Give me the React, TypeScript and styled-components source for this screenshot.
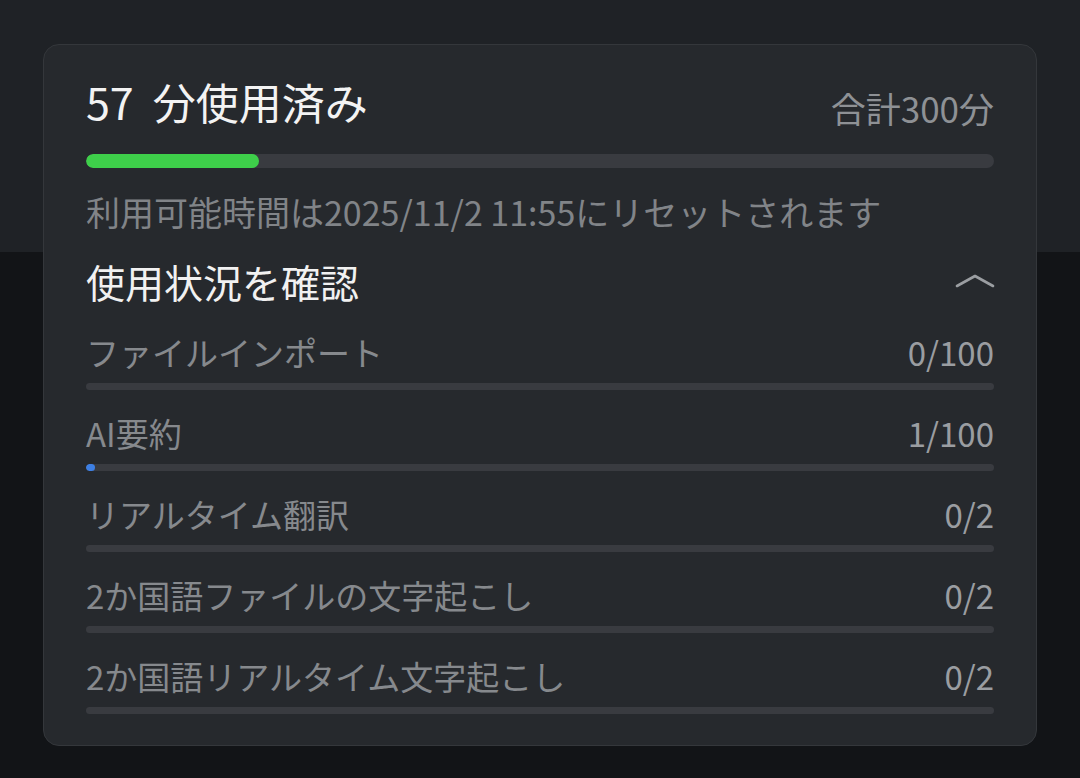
import React from 'react'
import styled, { createGlobalStyle } from 'styled-components'

const GlobalStyle = createGlobalStyle`
  html, body {
    margin: 0;
    padding: 0;
    background: #121417;
  }
  body {
    font-family: 'Noto Sans CJK JP', 'Noto Sans', sans-serif;
    -webkit-font-smoothing: antialiased;
  }
`

const Page = styled.div`
  width: 1080px;
  height: 778px;
  box-sizing: border-box;
  padding: 44px 43px 0;
  background: linear-gradient(to bottom, #1f2226 0, #1f2226 252px, #121417 252px);
`

const Card = styled.section`
  box-sizing: border-box;
  width: 994px;
  height: 702px;
  padding: 31px 42px 0 42px;
  background: #26292d;
  border: 1px solid #34373b;
  border-radius: 16px;
  display: flex;
  flex-direction: column;
`

const HeaderRow = styled.div`
  display: flex;
  justify-content: space-between;
  align-items: flex-start;
`

const UsedTitle = styled.h1`
  margin: 0;
  font-size: 43px;
  line-height: 50px;
  font-weight: 400;
  color: #f3f3f3;
`

const UsedNumber = styled.span`
  margin-right: 19px;
`

const TotalText = styled.span`
  margin-top: 12px;
  font-size: 35px;
  line-height: 40px;
  color: #8e9195;
`

const Track = styled.div<{ $height: number; $gap: number }>`
  position: relative;
  height: ${(p) => p.$height}px;
  margin-top: ${(p) => p.$gap}px;
  border-radius: ${(p) => p.$height / 2}px;
  background: #393b40;
  overflow: hidden;
`

const Fill = styled.div<{ $color: string }>`
  height: 100%;
  border-radius: inherit;
  background: ${(p) => p.$color};
`

const ResetNote = styled.p`
  margin: 22px 0 0;
  font-size: 34px;
  line-height: 44px;
  color: #818488;
  white-space: nowrap;
`

const SectionHeader = styled.div`
  margin-top: 23px;
  display: flex;
  justify-content: space-between;
  align-items: center;
  height: 48px;
`

const SectionTitle = styled.h2`
  margin: 0;
  font-size: 39px;
  line-height: 48px;
  font-weight: 400;
  color: #f1f1f1;
`

const Chevron = styled.svg`
  width: 40px;
  height: 16px;
  margin-right: -1px;
`

const ItemList = styled.div`
  margin-top: 25px;
  display: flex;
  flex-direction: column;
  gap: 21.5px;
`

const Item = styled.div`
  display: flex;
  flex-direction: column;
`

const ItemRow = styled.div`
  display: flex;
  justify-content: space-between;
  align-items: center;
  height: 44px;
  font-size: 33px;
  line-height: 44px;
`

const ItemLabel = styled.span`
  color: #86898d;
`

const ItemCount = styled.span`
  color: #9a9da1;
`

const items = [
  { label: 'ファイルインポート', used: 0, total: 100 },
  { label: 'AI要約', used: 1, total: 100 },
  { label: 'リアルタイム翻訳', used: 0, total: 2 },
  { label: '2か国語ファイルの文字起こし', used: 0, total: 2 },
  { label: '2か国語リアルタイム文字起こし', used: 0, total: 2 },
]

const App: React.FC = () => {
  const usedMinutes = 57
  const totalMinutes = 300

  return (
    <Page>
      <GlobalStyle />
      <Card>
        <HeaderRow>
          <UsedTitle>
            <UsedNumber>{usedMinutes}</UsedNumber>分使用済み
          </UsedTitle>
          <TotalText>合計{totalMinutes}分</TotalText>
        </HeaderRow>

        <Track $height={14} $gap={26}>
          <Fill $color="#3ecf4a" style={{ width: `${(usedMinutes / totalMinutes) * 100}%` }} />
        </Track>

        <ResetNote>利用可能時間は2025/11/2 11:55にリセットされます</ResetNote>

        <SectionHeader>
          <SectionTitle>使用状況を確認</SectionTitle>
          <Chevron viewBox="0 0 40 16" fill="none">
            <path d="M2 13 L20 3 L38 13" stroke="#9b9ea2" strokeWidth="2.6" strokeLinecap="round" strokeLinejoin="round" />
          </Chevron>
        </SectionHeader>

        <ItemList>
          {items.map((it) => (
            <Item key={it.label}>
              <ItemRow>
                <ItemLabel>{it.label}</ItemLabel>
                <ItemCount>
                  {it.used}/{it.total}
                </ItemCount>
              </ItemRow>
              <Track $height={7} $gap={8.5}>
                {it.used > 0 && (
                  <Fill
                    $color="#3d7fe3"
                    style={{ width: `max(8px, ${(it.used / it.total) * 100}%)` }}
                  />
                )}
              </Track>
            </Item>
          ))}
        </ItemList>
      </Card>
    </Page>
  )
}

export default App
